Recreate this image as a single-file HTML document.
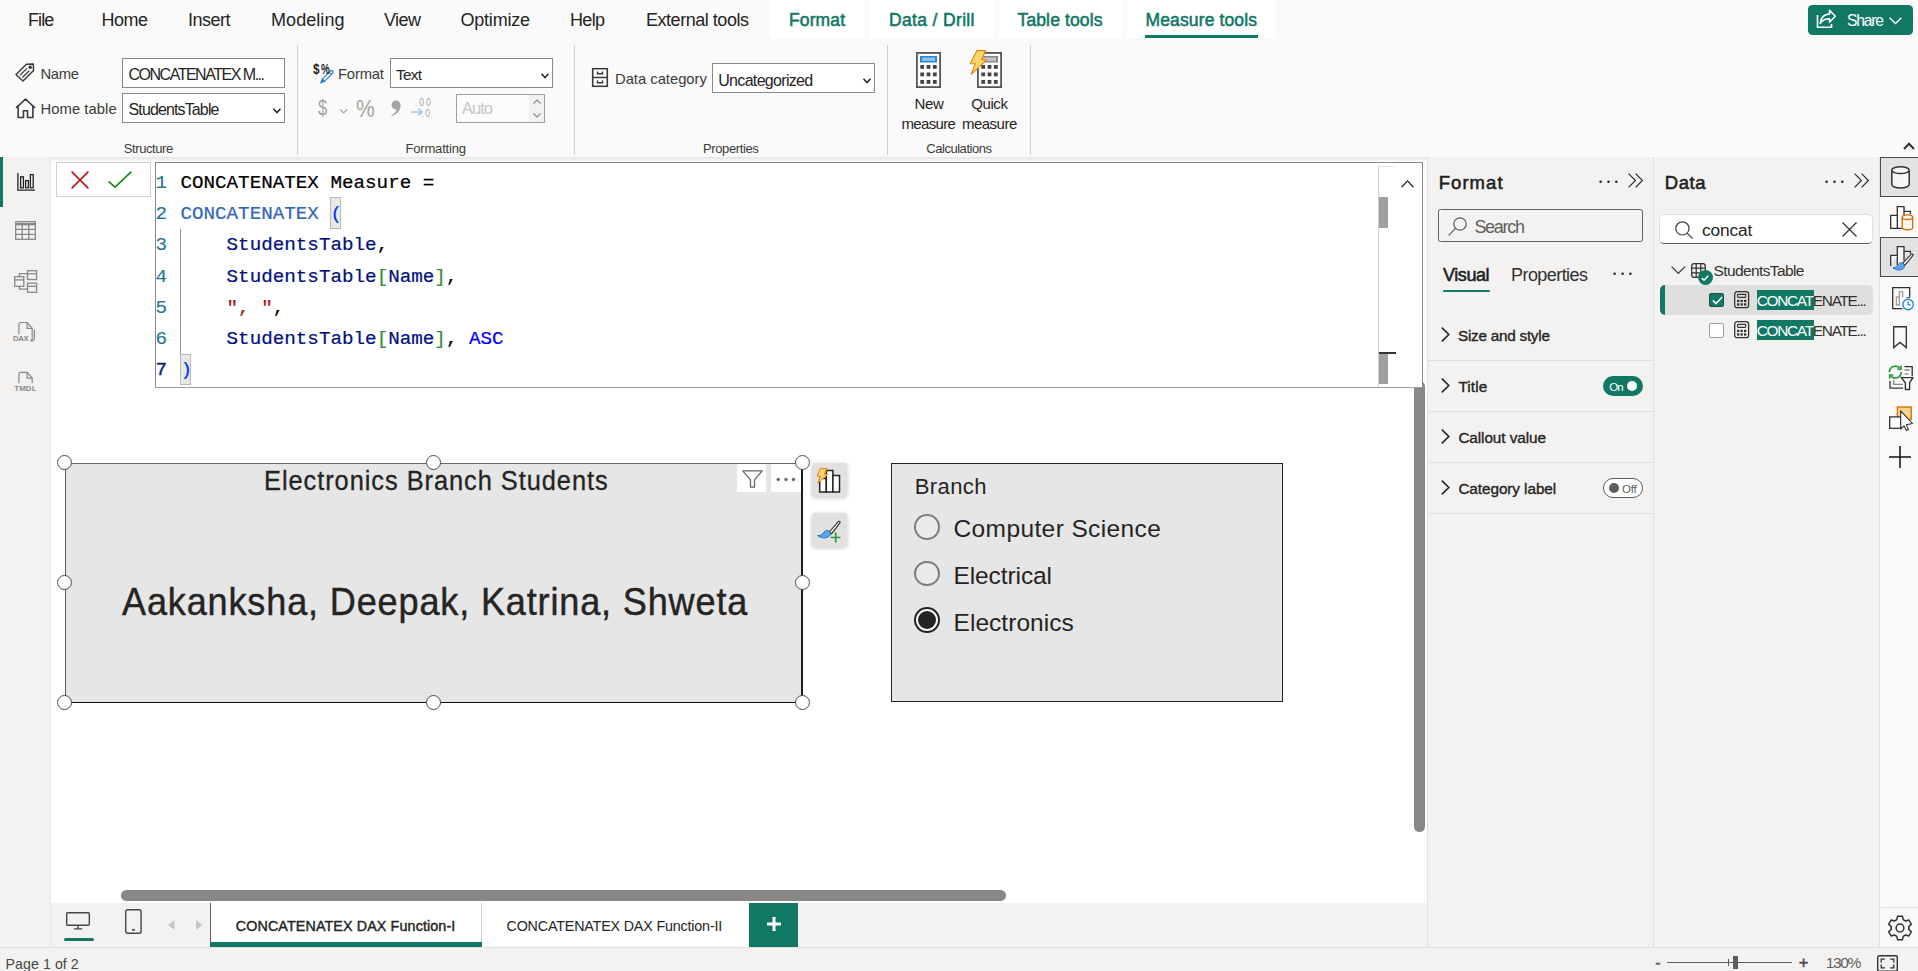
<!DOCTYPE html>
<html lang="en">
<head>
<meta charset="utf-8">
<title>Power BI Desktop - CONCATENATEX</title>
<style>
*{box-sizing:border-box;margin:0;padding:0}
html,body{width:1918px;height:971px;overflow:hidden;background:#fff}
body{font-family:"Liberation Sans",sans-serif;color:#252423;position:relative}
#app{position:absolute;left:0;top:0;width:1918px;height:971px;overflow:hidden;background:#fff}
.a{position:absolute}
.t{position:absolute;white-space:nowrap;line-height:1;color:#252423}
svg{position:absolute;overflow:visible}
.teal{color:#117865}
/* top */
#top{left:0;top:0;width:1918px;height:157px;background:#fafafa}
.wtab{top:0;height:38px;background:#fff}
.vsep{width:1px;top:45px;height:110px;background:#d2d0ce}
.inp{background:#fff;border:1px solid #8a8886}
.grp{color:#3b3a39}
/* left nav */
#lnav{left:0;top:157px;width:51px;height:790px;background:#f3f2f1;border-right:1px solid #e8e6e4}
/* editor */
.mono{font-family:"Liberation Mono",monospace;font-size:19.24px;line-height:31.3px;white-space:pre;position:absolute;left:180.4px;-webkit-text-stroke:.22px}
.ln{font-family:"Liberation Mono",monospace;font-size:19.24px;line-height:31.3px;position:absolute;left:155.6px;color:#237893;-webkit-text-stroke:.15px}
/* panes */
#fpane{left:1427px;top:157px;width:227px;height:790px;background:#f3f2f1;border-left:1px solid #e3e1df;border-right:1px solid #e1dfdd}
#dpane{left:1654px;top:157px;width:225px;height:790px;background:#f3f2f1}
#rbar{left:1879px;top:157px;width:39px;height:790px;background:#faf9f8;border-left:1px solid #e1dfdd}
.hsep{left:1428px;width:225px;height:1px;background:#e1dfdd}
.hl{background:#117865;color:#fff}
/* bottom */
#pbar{left:51px;top:903px;width:1376px;height:44px;background:#f3f2f1}
#status{left:0;top:947px;width:1918px;height:24px;background:#f3f2f1;border-top:1px solid #e1dfdd}
.handle{width:15px;height:15px;border-radius:50%;background:#fff;border:1.3px solid #4a4a4a}
</style>
</head>
<body>
<div id="app">

<!-- ================= TOP TABS + RIBBON ================= -->
<div id="top" class="a"></div>
<div class="a wtab" style="left:770px;width:94px"></div>
<div class="a wtab" style="left:870px;width:124px"></div>
<div class="a wtab" style="left:999px;width:123px"></div>
<div class="a wtab" style="left:1127px;width:149px"></div>
<div class="a" style="left:1145px;top:35px;width:113px;height:3px;background:#117865"></div>
<span class="t" style="left:28.00px;top:11.01px;font-size:18px;letter-spacing:-0.917px">File</span>
<span class="t" style="left:101.50px;top:11.01px;font-size:18px;letter-spacing:-0.500px">Home</span>
<span class="t" style="left:188.00px;top:11.01px;font-size:18px;letter-spacing:-0.500px">Insert</span>
<span class="t" style="left:271.00px;top:11.01px;font-size:18px;letter-spacing:0.062px">Modeling</span>
<span class="t" style="left:384.00px;top:11.01px;font-size:18px;letter-spacing:-0.583px">View</span>
<span class="t" style="left:460.50px;top:11.01px;font-size:18px;letter-spacing:-0.214px">Optimize</span>
<span class="t" style="left:570.00px;top:11.01px;font-size:18px;letter-spacing:-0.667px">Help</span>
<span class="t" style="left:646.00px;top:11.01px;font-size:18px;letter-spacing:-0.466px">External tools</span>
<span class="t" style="left:789.00px;top:12.00px;font-size:17.5px;letter-spacing:0.113px;color:#117865;-webkit-text-stroke:0.55px">Format</span>
<span class="t" style="left:889.00px;top:12.00px;font-size:17.5px;letter-spacing:0.347px;color:#117865;-webkit-text-stroke:0.55px">Data / Drill</span>
<span class="t" style="left:1017.50px;top:12.00px;font-size:17.5px;letter-spacing:0.131px;color:#117865;-webkit-text-stroke:0.55px">Table tools</span>
<span class="t" style="left:1145.50px;top:12.00px;font-size:17.5px;letter-spacing:0.130px;color:#117865;-webkit-text-stroke:0.55px">Measure tools</span>

<!-- share button -->
<div class="a" style="left:1808px;top:5px;width:105px;height:30px;border-radius:4.5px;background:#117865"></div>
<svg style="left:1816px;top:9px" width="21" height="20" viewBox="0 0 21 20" fill="none" stroke="#fff" stroke-width="1.6"><path d="M1.5 6v12.2h14V15"/><path d="M13.5 1.2l5.8 6-5.8 6V9.8c-4.5 0-7.2 1.4-9.3 4.6.5-5.2 3.6-9 9.3-9.4z" stroke-linejoin="round"/></svg>
<span class="t" style="left:1847.00px;top:13.01px;font-size:15.6px;letter-spacing:-1.172px;color:#fff">Share</span>
<svg style="left:1889px;top:16.5px" width="13" height="7.5" viewBox="0 0 13 7.5" fill="none" stroke="#fff" stroke-width="1.5"><path d="M.6.7l5.9 5.8L12.4.7"/></svg>

<!-- group separators -->
<div class="a vsep" style="left:297px"></div>
<div class="a vsep" style="left:574px"></div>
<div class="a vsep" style="left:887px"></div>
<div class="a vsep" style="left:1030px"></div>

<!-- Structure group -->
<svg style="left:15px;top:63px" width="20" height="19" viewBox="0 0 20 19" fill="none" stroke="#3b3a39" stroke-width="1.450" stroke-linejoin="round"><path d="M1 11.5L11.5 1.3l6.8-.3.2 6.6L8 18z"/><circle cx="15.2" cy="4.2" r="1" fill="#3b3a39"/><path d="M5 12.2l7-6.8M7.3 14.5l7-6.8" stroke-width="1.2"/></svg>
<span class="t" style="left:40.50px;top:67.00px;font-size:14.8px;letter-spacing:-0.333px;color:#3b3a39">Name</span>
<div class="a inp" style="left:122px;top:58px;width:163px;height:30px"></div>
<span class="t" style="left:128.50px;top:67.00px;font-size:16px;letter-spacing:-1.488px">CONCATENATEX M...</span>
<svg style="left:14.600px;top:97.700px" width="21" height="20.500" viewBox="0 0 20 20" fill="none" stroke="#3b3a39" stroke-width="1.550" stroke-linejoin="round"><path d="M.8 9.6L10 1l9.2 8.6M2.8 8v11h5.2v-6.5h4V19h5.2V8"/></svg>
<span class="t" style="left:40.50px;top:102.00px;font-size:14.8px;letter-spacing:0.056px;color:#3b3a39">Home table</span>
<div class="a inp" style="left:122px;top:93px;width:163px;height:30px"></div>
<span class="t" style="left:128.50px;top:102.00px;font-size:16px;letter-spacing:-0.870px">StudentsTable</span>
<svg style="left:273px;top:107.5px" width="8" height="6" viewBox="0 0 8 6" fill="none" stroke="#252423" stroke-width="1.5"><path d="M.5.8L4 4.6 7.5.8"/></svg>
<span class="t grp" style="left:123.75px;top:142.00px;font-size:13px;letter-spacing:-0.406px">Structure</span>

<!-- Formatting group -->
<svg style="left:319px;top:68px" width="16" height="16" viewBox="0 0 16 16" fill="none" stroke="#1f7fd1" stroke-width="1.150" stroke-linejoin="round"><path d="M3.300 11.100L11.300 3.100c.8-.8 1.800-.6 2.300-.1s.7 1.500-.1 2.300L5.500 13.300z" fill="#fafafa"/><path d="M3.300 11.100l2.200 2.200L1.700 14.900z" fill="#1f7fd1"/><path d="M10.300 4.100l2.200 2.200"/></svg>
<span class="t" style="left:312.90px;top:61.01px;font-size:15px;font-weight:bold;color:#252423;transform:scaleX(0.78);transform-origin:0 0">$</span>
<span class="t" style="left:320.60px;top:62.00px;font-size:14.5px;font-weight:bold;color:#252423;transform:scaleX(0.68);transform-origin:0 0">%</span>
<span class="t" style="left:338.00px;top:67.00px;font-size:14.8px;letter-spacing:-0.188px;color:#3b3a39">Format</span>
<div class="a inp" style="left:389.5px;top:58px;width:163.5px;height:30px"></div>
<span class="t" style="left:396.00px;top:67.00px;font-size:15.3px;letter-spacing:-0.688px">Text</span>
<svg style="left:541px;top:72.5px" width="8" height="6" viewBox="0 0 8 6" fill="none" stroke="#252423" stroke-width="1.5"><path d="M.5.8L4 4.6 7.5.8"/></svg>
<span class="t" style="left:317.80px;top:97.01px;font-size:22.5px;color:#a6a4a2;transform:scaleX(0.74);transform-origin:0 0">$</span>
<svg style="left:339.800px;top:109.300px" width="8" height="5" viewBox="0 0 8 5" fill="none" stroke="#a6a4a2" stroke-width="1.200"><path d="M.4.500L3.700 3.900 7 .5"/></svg>
<span class="t" style="left:356.00px;top:97.01px;font-size:24.5px;color:#a6a4a2;transform:scaleX(0.86);transform-origin:0 0">%</span>
<svg style="left:390.500px;top:100.200px" width="10" height="16" viewBox="0 0 10 16" fill="#a6a4a2"><circle cx="5" cy="4.900" r="4.500"/><path d="M9.500 5.200C9.900 10.200 6 14.300.8 15.900L.4 15C3.400 13.600 5.400 11.600 5.700 9.200z"/></svg>
<span class="t" style="left:414.50px;top:97.01px;font-size:11px;letter-spacing:2.408px;color:#a6a4a2;transform:scaleX(0.78);transform-origin:0 0">.00</span>
<span class="t" style="left:421.00px;top:108.00px;font-size:11px;letter-spacing:2.351px;color:#a6a4a2;transform:scaleX(0.78);transform-origin:0 0">.0</span>
<svg style="left:410.800px;top:108.400px" width="12" height="8" viewBox="0 0 12 8" fill="none" stroke="#9cc8e8" stroke-width="1.500"><path d="M0 3.900h10.800M7.300.4l3.700 3.500-3.700 3.500"/></svg>
<div class="a" style="left:456px;top:94px;width:89px;height:29px;background:#fcfcfc;border:1px solid #a19f9d"></div>
<div class="a" style="left:529px;top:95px;width:15px;height:27px;background:#f3f2f1"></div>
<span class="t" style="left:462.00px;top:100.02px;font-size:16.5px;letter-spacing:-0.979px;color:#c8c6c4">Auto</span>
<svg style="left:532.5px;top:98.5px" width="8" height="19" viewBox="0 0 8 19" fill="none" stroke="#8a8886" stroke-width="1.1"><path d="M.5 4.5L4 1l3.5 3.5M.5 14.5L4 18l3.5-3.5"/></svg>
<span class="t grp" style="left:405.50px;top:142.00px;font-size:13px;letter-spacing:-0.181px">Formatting</span>

<!-- Properties group -->
<svg style="left:592px;top:68px" width="16" height="19" viewBox="0 0 16 19" fill="none" stroke="#3b3a39" stroke-width="1.550"><rect x=".7" y=".7" width="14.6" height="17.6"/><path d="M.7 9.5h14.6M5.5 3.5v2.2h5V3.5M5.5 12.5v2.2h5v-2.2"/></svg>
<span class="t" style="left:615.00px;top:72.00px;font-size:14.8px;letter-spacing:-0.021px;color:#3b3a39">Data category</span>
<div class="a inp" style="left:712px;top:63px;width:163px;height:30px"></div>
<span class="t" style="left:718.25px;top:73.00px;font-size:16px;letter-spacing:-0.682px">Uncategorized</span>
<svg style="left:863px;top:77.5px" width="8" height="6" viewBox="0 0 8 6" fill="none" stroke="#252423" stroke-width="1.5"><path d="M.5.8L4 4.6 7.5.8"/></svg>
<span class="t grp" style="left:703.00px;top:142.00px;font-size:13px;letter-spacing:-0.389px">Properties</span>

<!-- Calculations group -->
<svg style="left:916px;top:52px" width="25" height="36" viewBox="0 0 25 36"><rect x=".9" y=".9" width="23.2" height="34.2" fill="#fff" stroke="#555" stroke-width="1.8"/><rect x="4" y="4" width="17" height="6.5" fill="#2b88d8"/><rect x="6" y="5.5" width="13" height="3.5" fill="#8fc3ef"/><g fill="#444"><rect x="4.3" y="13" width="3.8" height="3.8"/><rect x="10.6" y="13" width="3.8" height="3.8"/><rect x="16.9" y="13" width="3.8" height="3.8"/><rect x="4.3" y="20.5" width="3.8" height="3.8"/><rect x="10.6" y="20.5" width="3.8" height="3.8"/><rect x="16.9" y="20.5" width="3.8" height="3.8"/><rect x="4.3" y="28" width="3.8" height="3.8"/><rect x="10.6" y="28" width="3.8" height="3.8"/><rect x="16.9" y="28" width="3.8" height="3.8"/></g></svg>
<span class="t" style="left:914.40px;top:96.01px;font-size:15px;letter-spacing:-0.331px">New</span>
<span class="t" style="left:901.50px;top:116.01px;font-size:15px;letter-spacing:-0.663px">measure</span>
<svg style="left:969px;top:50px" width="33" height="38" viewBox="0 0 33 38"><rect x="8.9" y="2.9" width="23.2" height="34.2" fill="#fff" stroke="#555" stroke-width="1.8"/><rect x="12" y="6" width="17" height="6.5" fill="#8a8886"/><rect x="14" y="7.5" width="13" height="3.5" fill="#c8c6c4"/><g fill="#444"><rect x="12.3" y="15" width="3.8" height="3.8"/><rect x="18.6" y="15" width="3.8" height="3.8"/><rect x="24.9" y="15" width="3.8" height="3.8"/><rect x="12.3" y="22.5" width="3.8" height="3.8"/><rect x="18.6" y="22.5" width="3.8" height="3.8"/><rect x="24.9" y="22.5" width="3.8" height="3.8"/><rect x="12.3" y="30" width="3.8" height="3.8"/><rect x="18.6" y="30" width="3.8" height="3.8"/><rect x="24.9" y="30" width="3.8" height="3.8"/></g><path d="M8 .6h8.6l-4 9.2h5L2.2 24.4l4.2-10.6H1.2z" fill="#fbd66b" stroke="#e8820c" stroke-width="1.1" stroke-linejoin="round"/></svg>
<span class="t" style="left:971.25px;top:96.01px;font-size:15px;letter-spacing:-0.422px">Quick</span>
<span class="t" style="left:962.00px;top:116.01px;font-size:15px;letter-spacing:-0.521px">measure</span>
<span class="t grp" style="left:926.25px;top:142.00px;font-size:13px;letter-spacing:-0.460px">Calculations</span>
<!-- collapse ribbon chevron -->
<svg style="left:1902.500px;top:141.800px" width="12" height="8" viewBox="0 0 12 8" fill="none" stroke="#323130" stroke-width="2"><path d="M1 7l5-5.300L11 7"/></svg>
<!-- ribbon bottom shadow -->
<div class="a" style="left:0;top:157px;width:1918px;height:5px;background:linear-gradient(#e4e4e4,rgba(240,240,240,0))"></div>
<!--TOP-->

<!-- ================= LEFT NAV ================= -->
<div id="lnav" class="a"></div>
<div class="a" style="left:0;top:157px;width:3px;height:50px;background:#117865"></div>
<!-- report icon -->
<svg style="left:16.5px;top:172.5px" width="18" height="18" viewBox="0 0 18 18" fill="none" stroke="#252423" stroke-width="1.3"><path d="M.9 0v17.2H18"/><rect x="3.6" y="3.8" width="2.8" height="11"/><rect x="8.6" y="7.6" width="2.8" height="7.2"/><rect x="13.4" y="1.6" width="2.8" height="13.2"/></svg>
<!-- table icon -->
<svg style="left:15px;top:221px" width="21" height="19" viewBox="0 0 21 19" fill="none" stroke="#8a8886" stroke-width="1.3"><rect x=".7" y=".7" width="19.6" height="17.6"/><path d="M.7 3.2h19.6" stroke-width="2.4"/><path d="M.7 8.4h19.6M.7 13.3h19.6M7.2 3.2v15M13.8 3.2v15"/></svg>
<!-- model icon -->
<svg style="left:14px;top:270px" width="24" height="23" viewBox="0 0 24 23" fill="none" stroke="#8a8886" stroke-width="1.300"><rect x=".7" y="6.700" width="9.100" height="9.600"/><path d="M.7 9.900h9.100"/><rect x="13.500" y=".7" width="9.100" height="8.800"/><path d="M13.500 3.800h9.100"/><rect x="13.500" y="13.200" width="9.100" height="9.100"/><path d="M13.500 16.300h9.100"/><path d="M5.400 6.700V3.700h8.100M5.400 16.300v2.900h8.100"/></svg>
<!-- DAX icon -->
<svg style="left:12.500px;top:320.500px" width="23" height="22" viewBox="0 0 23 22" fill="none" stroke="#8a8886" stroke-width="1.200"><path d="M5.900 13.200V3.700c0-1.300.9-2.200 2.200-2.200h6l5.100 5.800v10.200c0 1.300-.7 2.200-1.900 2.400"/><path d="M14.100 1.500v5.800h5.100"/><path d="M21.400 8.800v8c0 1.900-1.300 3.200-3.300 3.400"/></svg>
<span class="t" style="left:13.00px;top:335.00px;font-size:7.8px;letter-spacing:-0.350px;font-weight:bold;color:#8a8886">DAX</span>
<!-- TMDL icon -->
<svg style="left:12.500px;top:370.500px" width="23" height="13" viewBox="0 0 23 13" fill="none" stroke="#8a8886" stroke-width="1.200"><path d="M5.900 12.300V3.600c0-1.300.9-2.200 2.200-2.200h6l5.100 5.700v5.200"/><path d="M14.100 1.400v5.700h5.100"/></svg>
<span class="t" style="left:14.20px;top:385.00px;font-size:7.8px;letter-spacing:0.204px;font-weight:bold;color:#8a8886">TMDL</span>
<!--LNAV-->

<!-- ================= CANVAS ================= -->
<!-- commit/cancel box -->
<div class="a" style="left:56px;top:162px;width:95px;height:35px;background:#fff;border:1px solid #d2d0ce"></div>
<svg style="left:71px;top:171px" width="18" height="18" viewBox="0 0 18 18" fill="none" stroke="#b5121b" stroke-width="1.5"><path d="M.6.6l16.800 16.800M17.400.6L.6 17.400"/></svg>
<svg style="left:107.500px;top:171px" width="24" height="17" viewBox="0 0 24 17" fill="none" stroke="#138a13" stroke-width="1.600"><path d="M.6 10.400l6.400 5.800L23.400.6"/></svg>
<!-- canvas vertical scrollbar (behind editor) -->
<div class="a" style="left:1414px;top:380.500px;width:11px;height:451.500px;background:#8a8886;border-radius:5.500px"></div>
<!-- editor -->
<div class="a" style="left:155px;top:162px;width:1268px;height:226px;background:#fff;border:1px solid #8a8886;border-bottom-color:#a19f9d"></div>
<div class="a" style="left:180.400px;top:229px;width:1px;height:125px;background:#939393"></div>
<div class="a" style="left:330px;top:197px;width:11px;height:32px;background:#e3ebe3;border:1px solid #b9b9b9"></div>
<div class="a" style="left:180px;top:354px;width:11px;height:31px;background:#e3ebe3;border:1px solid #b9b9b9"></div>
<div class="ln" style="top:167.700px">1<br>2<br>3<br>4<br>5<br>6<br><span style="color:#0b216f;-webkit-text-stroke:.4px">7</span></div>
<div class="mono" style="top:167.700px"><span style="color:#000">CONCATENATEX Measure =</span>
<span style="color:#3165bb">CONCATENATEX</span> <span style="color:#0431fa">(</span>
<span style="color:#001080">    StudentsTable</span><span style="color:#000">,</span>
<span style="color:#001080">    StudentsTable</span><span style="color:#319331">[</span><span style="color:#001080">Name</span><span style="color:#319331">]</span><span style="color:#000">,</span>
<span style="color:#a31515">    ", "</span><span style="color:#000">,</span>
<span style="color:#001080">    StudentsTable</span><span style="color:#319331">[</span><span style="color:#001080">Name</span><span style="color:#319331">]</span><span style="color:#000">,</span> <span style="color:#0000ff">ASC</span>
<span style="color:#0431fa">)</span></div>
<!-- overview ruler -->
<div class="a" style="left:1378px;top:166px;width:1px;height:221px;background:#d0d0d0"></div>
<div class="a" style="left:1378px;top:166px;width:18px;height:1px;background:#e4e4e4"></div>
<div class="a" style="left:1379px;top:197px;width:8.500px;height:31px;background:#a0a0a0"></div>
<div class="a" style="left:1379px;top:354px;width:8.500px;height:30px;background:#a0a0a0"></div>
<div class="a" style="left:1379px;top:352px;width:17px;height:2px;background:#333"></div>
<svg style="left:1400.500px;top:180px" width="13" height="8" viewBox="0 0 13 8" fill="none" stroke="#252423" stroke-width="1.300"><path d="M.6 7.200L6.500.9l5.900 6.300"/></svg>
<!-- canvas vertical scrollbar -->
<!-- horizontal scrollbar -->
<div class="a" style="left:121px;top:890px;width:885px;height:11px;background:#8a8886;border-radius:5.500px"></div>

<!-- ===== card visual ===== -->
<div class="a" style="left:65px;top:463px;width:738.400px;height:239.500px;background:#e6e6e6;border-style:solid;border-color:#666 #1a1a1a #0a0a0a #5c5c5c;border-width:1.300px 2.500px 1.800px 1.400px"></div>
<span class="t din" style="left:263.60px;top:468.02px;font-size:27px;letter-spacing:1.017px;transform:scaleX(0.94);transform-origin:0 0;-webkit-text-stroke:.3px #252423">Electronics Branch Students</span>
<span class="t din" style="left:122.00px;top:583.00px;font-size:38.8px;letter-spacing:0.900px;transform:scaleX(0.93);transform-origin:0 0;-webkit-text-stroke:.45px #252423">Aakanksha, Deepak, Katrina, Shweta</span>
<div class="a" style="left:737px;top:464.300px;width:29px;height:27.700px;background:#fff"></div>
<div class="a" style="left:771px;top:464.300px;width:30px;height:27.700px;background:#fff"></div>
<svg style="left:741.500px;top:470px" width="21" height="18" viewBox="0 0 21 18" fill="none" stroke="#666" stroke-width="1.300" stroke-linejoin="round"><path d="M.8.800h19.400l-7.700 9v7.400h-4v-7.400z"/></svg>
<svg style="left:776px;top:476.500px" width="20" height="5" viewBox="0 0 20 5" fill="#666"><circle cx="2.300" cy="2.400" r="1.700"/><circle cx="10" cy="2.400" r="1.700"/><circle cx="17.500" cy="2.400" r="1.700"/></svg>
<!-- handles -->
<div class="a handle" style="left:57px;top:454.700px"></div>
<div class="a handle" style="left:425.500px;top:454.700px"></div>
<div class="a handle" style="left:795px;top:454.700px"></div>
<div class="a handle" style="left:57px;top:574.700px"></div>
<div class="a handle" style="left:795px;top:574.700px"></div>
<div class="a handle" style="left:57px;top:694.800px"></div>
<div class="a handle" style="left:425.500px;top:694.800px"></div>
<div class="a handle" style="left:795px;top:694.800px"></div>
<!-- side buttons -->
<div class="a" style="left:812.300px;top:463px;width:34.300px;height:34px;background:#e3e1df;border-radius:3px;box-shadow:0 1px 4px rgba(0,0,0,.22)"></div>
<div class="a" style="left:812.300px;top:513.200px;width:34.300px;height:34px;background:#e3e1df;border-radius:3px;box-shadow:0 1px 4px rgba(0,0,0,.22)"></div>
<svg style="left:816px;top:467.500px" width="25" height="25" viewBox="0 0 25 25"><g fill="#fff" stroke="#252423" stroke-width="1.500"><rect x="3.700" y="10.500" width="6.600" height="13.500"/><rect x="10.300" y="2.500" width="6.600" height="21.500"/><rect x="16.900" y="7.500" width="6.600" height="16.500"/></g><path d="M4.200.6h7l-3 5.600h3.600L1.800 15.200l2.800-7H1z" fill="#fbd66b" stroke="#e8820c" stroke-width="1" stroke-linejoin="round"/></svg>
<svg style="left:817px;top:519.500px" width="25" height="23" viewBox="0 0 25 23"><path d="M12.300 12L21.300 1.600c.9-.9 2.300.1 1.600 1.200L14.500 13.800z" fill="#fff" stroke="#252423" stroke-width="1.100" stroke-linejoin="round"/><path d="M.5 15.600c3 .3 5.200-1.600 6.600-3.600 1.200-1.800 3.900-2 5.400-.6 1.400 1.400 1.200 3.600-.4 4.900-3 2.500-8.300 2-11.600-.7z" fill="#5ba4e6" stroke="#1f6fc2" stroke-width=".9"/><path d="M18.700 12.600v9.800M13.800 17.500h9.800" stroke="#2a9a43" stroke-width="1.700" fill="none"/></svg>

<!-- ===== slicer visual ===== -->
<div class="a" style="left:891px;top:463px;width:392px;height:239px;background:#e6e6e6;border:1.300px solid #252423"></div>
<span class="t" style="left:914.70px;top:476.00px;font-size:22px;letter-spacing:0.403px;color:#252423">Branch</span>
<div class="a" style="left:914px;top:514.200px;width:25.800px;height:25.800px;border-radius:50%;border:2px solid #807e7c;background:#eaeaea"></div>
<div class="a" style="left:914px;top:560.500px;width:25.800px;height:25.800px;border-radius:50%;border:2px solid #807e7c;background:#eaeaea"></div>
<div class="a" style="left:914px;top:607.100px;width:25.800px;height:25.800px;border-radius:50%;border:2px solid #252423;background:#f6f6f6"></div>
<div class="a" style="left:917.500px;top:610.600px;width:18.800px;height:18.800px;border-radius:50%;background:#252423"></div>
<span class="t" style="left:953.50px;top:517.00px;font-size:24.5px;letter-spacing:0.389px;color:#252423">Computer Science</span>
<span class="t" style="left:953.50px;top:564.00px;font-size:24.5px;letter-spacing:-0.097px;color:#252423">Electrical</span>
<span class="t" style="left:953.50px;top:611.01px;font-size:24.5px;letter-spacing:0.049px;color:#252423">Electronics</span>
<!--CANVAS-->

<!-- ================= FORMAT PANE ================= -->
<div id="fpane" class="a"></div>
<span class="t" style="left:1438.75px;top:174.01px;font-size:18.5px;letter-spacing:1.038px;color:#201f1e;-webkit-text-stroke:0.55px">Format</span>
<svg style="left:1598.500px;top:179.500px" width="19" height="4" viewBox="0 0 19 4" fill="#252423"><circle cx="1.600" cy="1.700" r="1.250"/><circle cx="9.500" cy="1.700" r="1.250"/><circle cx="17.300" cy="1.700" r="1.250"/></svg>
<svg style="left:1627.500px;top:173px" width="15" height="15" viewBox="0 0 15 15" fill="none" stroke="#252423" stroke-width="1.150"><path d="M.6.6l6.800 6.900-6.800 6.900M7.600.6l6.800 6.900-6.800 6.900"/></svg>
<div class="a" style="left:1438px;top:209px;width:205px;height:33px;border:1px solid #605e5c;border-radius:2.500px"></div>
<svg style="left:1447.500px;top:216.500px" width="19" height="19" viewBox="0 0 19 19" fill="none" stroke="#605e5c" stroke-width="1.250"><circle cx="12" cy="7" r="6.200"/><path d="M7.600 11.400L.6 18.400"/></svg>
<span class="t" style="left:1474.40px;top:218.01px;font-size:18px;letter-spacing:-1.292px;color:#605e5c">Search</span>
<span class="t" style="left:1443.00px;top:266.01px;font-size:18px;letter-spacing:-0.417px;color:#201f1e;-webkit-text-stroke:0.55px">Visual</span>
<div class="a" style="left:1443px;top:289.700px;width:47px;height:2.600px;background:#117865;border-radius:1px"></div>
<span class="t" style="left:1511.00px;top:266.01px;font-size:18px;letter-spacing:-0.562px;color:#323130">Properties</span>
<svg style="left:1613.300px;top:272px" width="19" height="4" viewBox="0 0 19 4" fill="#252423"><circle cx="1.600" cy="1.700" r="1.250"/><circle cx="9.600" cy="1.700" r="1.250"/><circle cx="17.400" cy="1.700" r="1.250"/></svg>
<!-- rows -->
<svg style="left:1441.300px;top:327px" width="9" height="15" viewBox="0 0 9 15" fill="none" stroke="#252423" stroke-width="1.600"><path d="M.8.600l7 6.900-7 6.900"/></svg>
<span class="t" style="left:1458.00px;top:328.01px;font-size:15.3px;letter-spacing:-0.255px;color:#252423;-webkit-text-stroke:0.36px">Size and style</span>
<div class="a hsep" style="top:360px"></div>
<svg style="left:1441.300px;top:378.300px" width="9" height="15" viewBox="0 0 9 15" fill="none" stroke="#252423" stroke-width="1.600"><path d="M.8.600l7 6.900-7 6.900"/></svg>
<span class="t" style="left:1458.40px;top:379.01px;font-size:15.3px;letter-spacing:0.106px;color:#252423;-webkit-text-stroke:0.36px">Title</span>
<div class="a" style="left:1603px;top:376px;width:40px;height:20px;border-radius:10px;background:#117865"></div>
<span class="t" style="left:1609.20px;top:382.00px;font-size:11.5px;letter-spacing:-0.812px;color:#fff">On</span>
<div class="a" style="left:1626.800px;top:380.800px;width:10.500px;height:10.500px;border-radius:50%;background:#fff"></div>
<div class="a hsep" style="top:411px"></div>
<svg style="left:1441.300px;top:429.300px" width="9" height="15" viewBox="0 0 9 15" fill="none" stroke="#252423" stroke-width="1.600"><path d="M.8.600l7 6.900-7 6.900"/></svg>
<span class="t" style="left:1458.40px;top:430.00px;font-size:15.3px;letter-spacing:-0.075px;color:#252423;-webkit-text-stroke:0.36px">Callout value</span>
<div class="a hsep" style="top:462px"></div>
<svg style="left:1441.300px;top:480px" width="9" height="15" viewBox="0 0 9 15" fill="none" stroke="#252423" stroke-width="1.600"><path d="M.8.600l7 6.900-7 6.900"/></svg>
<span class="t" style="left:1458.40px;top:481.00px;font-size:15.3px;letter-spacing:-0.065px;color:#252423;-webkit-text-stroke:0.36px">Category label</span>
<div class="a" style="left:1603px;top:478.200px;width:40px;height:20px;border-radius:10px;background:#fff;border:1px solid #605e5c"></div>
<div class="a" style="left:1608.800px;top:483px;width:10.400px;height:10.400px;border-radius:50%;background:#605e5c"></div>
<span class="t" style="left:1622.00px;top:484.00px;font-size:11.5px;letter-spacing:-0.194px;color:#605e5c">Off</span>
<div class="a hsep" style="top:513px"></div>
<!--FPANE-->

<!-- ================= DATA PANE ================= -->
<div id="dpane" class="a"></div>
<span class="t" style="left:1664.75px;top:174.01px;font-size:18.5px;letter-spacing:0.575px;color:#201f1e;-webkit-text-stroke:0.55px">Data</span>
<svg style="left:1824.500px;top:179.500px" width="19" height="4" viewBox="0 0 19 4" fill="#252423"><circle cx="1.600" cy="1.700" r="1.250"/><circle cx="9.500" cy="1.700" r="1.250"/><circle cx="17.300" cy="1.700" r="1.250"/></svg>
<svg style="left:1853.700px;top:173px" width="15" height="15" viewBox="0 0 15 15" fill="none" stroke="#252423" stroke-width="1.150"><path d="M.6.600l6.800 6.900-6.800 6.900M7.600.6l6.800 6.900-6.800 6.900"/></svg>
<div class="a" style="left:1659.400px;top:214.400px;width:213.600px;height:29.400px;background:#fff;border:1px solid #e1dfdd;border-bottom:1.500px solid #605e5c;border-radius:5px"></div>
<svg style="left:1674.500px;top:220.500px" width="18" height="18" viewBox="0 0 18 18" fill="none" stroke="#424242" stroke-width="1.200"><circle cx="7.400" cy="7.400" r="6.600"/><path d="M12.200 12.200l5.300 5.300"/></svg>
<span class="t" style="left:1702.00px;top:222.00px;font-size:17.3px;letter-spacing:-0.100px;color:#252423">concat</span>
<svg style="left:1841.800px;top:222px" width="15" height="15" viewBox="0 0 15 15" fill="none" stroke="#323130" stroke-width="1.250"><path d="M.5.500l14 14M14.500.5l-14 14"/></svg>
<!-- tree -->
<svg style="left:1670.500px;top:266px" width="15" height="8" viewBox="0 0 15 8" fill="none" stroke="#424242" stroke-width="1.200"><path d="M.5.600L7.300 7.300 14.200.6"/></svg>
<svg style="left:1690.500px;top:262.500px" width="15" height="15" viewBox="0 0 15 15" fill="none" stroke="#323130" stroke-width="1.250"><rect x=".7" y=".7" width="13.600" height="13.600" rx="2.600"/><path d="M5.200.7v13.600M9.800.7v13.600M.7 5.200h13.600M.7 9.800h13.600"/></svg>
<div class="a" style="left:1697.750px;top:270px;width:15.100px;height:15.100px;border-radius:50%;background:#117865"></div>
<svg style="left:1701.300px;top:274.500px" width="8" height="6" viewBox="0 0 8 6" fill="none" stroke="#fff" stroke-width="1.500"><path d="M.7 3.100l2.300 2.100L7.300.8"/></svg>
<span class="t" style="left:1713.50px;top:263.01px;font-size:15.5px;letter-spacing:-0.612px;color:#323130">StudentsTable</span>
<!-- row 1 (selected) -->
<div class="a" style="left:1660px;top:285px;width:212.750px;height:29.750px;background:#e1dfdd;border-radius:5px"></div>
<div class="a" style="left:1660px;top:285px;width:5px;height:29.750px;background:#117865;border-radius:5px 0 0 5px"></div>
<div class="a" style="left:1709.400px;top:293px;width:14.400px;height:14.400px;background:#117865;border:1px solid #0c5a4b;border-radius:2px"></div>
<svg style="left:1711.500px;top:296px" width="11" height="9" viewBox="0 0 11 9" fill="none" stroke="#fff" stroke-width="1.500"><path d="M.8 4.400l3.200 3.200L10.200.9"/></svg>
<svg style="left:1734.400px;top:291.250px" width="16" height="18" viewBox="0 0 16 18" fill="none" stroke="#323130" stroke-width="1.300"><rect x=".7" y=".7" width="13.900" height="16" rx="2.500"/><rect x="3.500" y="3.400" width="8.300" height="3" rx=".8" stroke-width="1.100"/><g fill="#323130" stroke="none"><rect x="3" y="8.800" width="2.300" height="2.300"/><rect x="6.500" y="8.800" width="2.300" height="2.300"/><rect x="10" y="8.800" width="2.300" height="2.300"/><rect x="3" y="12.300" width="2.300" height="2.300"/><rect x="6.500" y="12.300" width="2.300" height="2.300"/><rect x="10" y="12.300" width="2.300" height="2.300"/></g></svg>
<div class="a" style="left:1756.900px;top:290px;width:56.850px;height:19.750px;background:#117865"></div>
<span class="t" style="left:1756.70px;top:293.02px;font-size:15.4px;letter-spacing:-1.284px;color:#323130"><b style="font-weight:normal;color:#fff">CONCAT</b>ENATE...</span>
<!-- row 2 -->
<div class="a" style="left:1709.400px;top:323.400px;width:14.400px;height:14.400px;background:#fff;border:1px solid #a19f9d;border-radius:2px"></div>
<svg style="left:1734.400px;top:321.250px" width="16" height="18" viewBox="0 0 16 18" fill="none" stroke="#323130" stroke-width="1.300"><rect x=".7" y=".7" width="13.900" height="16" rx="2.500"/><rect x="3.500" y="3.400" width="8.300" height="3" rx=".8" stroke-width="1.100"/><g fill="#323130" stroke="none"><rect x="3" y="8.800" width="2.300" height="2.300"/><rect x="6.500" y="8.800" width="2.300" height="2.300"/><rect x="10" y="8.800" width="2.300" height="2.300"/><rect x="3" y="12.300" width="2.300" height="2.300"/><rect x="6.500" y="12.300" width="2.300" height="2.300"/><rect x="10" y="12.300" width="2.300" height="2.300"/></g></svg>
<div class="a" style="left:1756.900px;top:320px;width:56.850px;height:19.750px;background:#117865"></div>
<span class="t" style="left:1756.70px;top:323.02px;font-size:15.4px;letter-spacing:-1.284px;color:#323130"><b style="font-weight:normal;color:#fff">CONCAT</b>ENATE...</span>
<!--DPANE-->

<!-- ================= RIGHT BAR ================= -->
<div id="rbar" class="a"></div>
<div class="a" style="left:1880px;top:157.200px;width:38px;height:39.600px;background:#e3e2e0;border:1.400px solid #4f4d4b;border-right:none"></div>
<div class="a" style="left:1880px;top:237.200px;width:38px;height:39.600px;background:#e3e2e0;border:1.400px solid #4f4d4b;border-right:none"></div>
<!-- 1 data cylinder -->
<svg style="left:1891px;top:166px" width="19" height="23" viewBox="0 0 19 23" fill="#f6f5f4" stroke="#323130" stroke-width="1.500"><path d="M.8 4.200v14.400c0 1.900 3.900 3.500 8.700 3.500s8.700-1.600 8.700-3.500V4.200"/><ellipse cx="9.500" cy="4.200" rx="8.700" ry="3.400"/></svg>
<!-- 2 build visual -->
<svg style="left:1890px;top:206px" width="24" height="25" viewBox="0 0 24 25" fill="none"><g stroke="#323130" stroke-width="1.300" fill="#fff"><path d="M7.300 22.400V.7h6.700v21.700z"/><path d="M.7 22.400V9.300h6.600v13.100z"/><path d="M14 5.300h6.400v2.600" fill="none"/></g><g stroke="#d9710b" stroke-width="1.400" fill="#fdf6ee"><path d="M12.200 11.200v10.400c0 1.300 2.300 2.200 5.250 2.200s5.250-.9 5.250-2.200V11.200"/><ellipse cx="17.450" cy="11.200" rx="5.250" ry="2.300"/></g></svg>
<!-- 3 format visual -->
<svg style="left:1890px;top:246px" width="24" height="25" viewBox="0 0 24 25" fill="none"><g stroke="#323130" stroke-width="1.300" fill="#f6f6f6"><path d="M7.300 19V.7h6.700v14"/><path d="M.7 20V9.400h6.600"/><path d="M14 5.400h6.400v2" fill="none"/></g><path d="M12.600 17.200L21.200 8.300c1-.9 2.400.2 1.600 1.400L14.800 19.300z" fill="#fff" stroke="#323130" stroke-width="1.100" stroke-linejoin="round"/><path d="M3 21.800c2.700-.1 4.200-1.600 5.200-3.300 1.100-1.900 3.600-2.400 5.200-1 1.600 1.400 1.500 3.700-.1 5.100-2.700 2.300-7.600 1.700-10.300-.8z" fill="#5ba4e6" stroke="#1f6fc2" stroke-width=".9"/></svg>
<!-- 4 perf analyzer -->
<svg style="left:1891.500px;top:286.500px" width="23" height="24" viewBox="0 0 23 24" fill="none"><path d="M10.500 21.700H.7V.7h17v10" stroke="#323130" stroke-width="1.300"/><g stroke="#a19f9d" stroke-width="1.300"><path d="M4.400 18v-8h3v8zM7.400 18V4.600h3.200v6"/></g><circle cx="16.100" cy="17.500" r="5.200" stroke="#2b88d8" stroke-width="1.400" fill="#fff"/><path d="M16.100 14.300v3.500h2.700M14.300 10.700h3.600" stroke="#2b88d8" stroke-width="1.300"/></svg>
<!-- 5 bookmark -->
<svg style="left:1893px;top:326.300px" width="14" height="23" viewBox="0 0 14 23" fill="none" stroke="#323130" stroke-width="1.350"><path d="M.7.700h12.600v20.800L7 16.400.7 21.500z"/></svg>
<!-- 6 sync slicers -->
<svg style="left:1887.500px;top:364.800px" width="26" height="26" viewBox="0 0 26 26" fill="none"><g stroke-width="1.300"><path d="M16.500 1.600h7.700v9.600M2 15.800v7.400h13.100" stroke="#323130"/><path d="M16.500 5h5.200M16.500 8.800h4M5.800 14.700v4.700h9.100" stroke="#8a8886"/></g><path d="M13.200 12.600h11.800l-3.400 5.100v6.800h-4.200v-6.800z" fill="#fff" stroke="#323130" stroke-width="1.400" stroke-linejoin="round"/><g stroke="#2a9a43" stroke-width="1.700"><path d="M1.400 7.300A6 6 0 0 1 12.200 3.600M13.200 7A6 6 0 0 1 2.400 10.700"/><path d="M13 .4v3.800H9.200M1.600 13.800V10h3.800" stroke-width="1.500"/></g></svg>
<!-- 7 selection -->
<svg style="left:1889px;top:406px" width="24" height="25" viewBox="0 0 24 25" fill="none"><rect x="8.400" y="1" width="13.800" height="12.400" fill="#f9d48b" stroke="#d9710b" stroke-width="1.400"/><rect x=".7" y="10.900" width="11.400" height="11.400" fill="#fff" stroke="#323130" stroke-width="1.300"/><path d="M11.700 4.800v18.200l3.300-3.200 2.300 4.700 2.200-1-2.200-4.800 6.200-1.200z" fill="#fff" stroke="#323130" stroke-width="1.100" stroke-linejoin="round"/></svg>
<!-- 8 plus -->
<svg style="left:1889px;top:446px" width="22" height="22" viewBox="0 0 22 22" fill="none" stroke="#111" stroke-width="1.500"><path d="M11 0v22M0 11h22"/></svg>
<!-- gear -->
<div class="a" style="left:1881px;top:907px;width:37px;height:1px;background:#e1dfdd"></div>
<svg style="left:1887px;top:914.500px" width="26" height="26" viewBox="0 0 26 26" fill="none" stroke="#323130" stroke-width="1.500" stroke-linejoin="round"><circle cx="13" cy="13" r="3.900"/><path d="M10.600 1.200h4.800l.8 3.400 2.400 1.400 3.300-1 2.400 4.200-2.500 2.400v2.800l2.500 2.400-2.400 4.200-3.300-1-2.400 1.400-.8 3.400h-4.800l-.8-3.400-2.400-1.400-3.300 1-2.400-4.200 2.500-2.400v-2.800L1.700 9.200 4.100 5l3.300 1 2.400-1.400z"/></svg>
<!--RBAR-->

<!-- ================= BOTTOM ================= -->
<div id="pbar" class="a"></div>
<div id="status" class="a"></div>
<!-- view toggles -->
<svg style="left:65.500px;top:912px" width="24" height="18" viewBox="0 0 24 18" fill="none" stroke="#484644" stroke-width="1.400"><rect x=".7" y=".7" width="22.600" height="12.600" rx="1"/><path d="M12 13.300v3.500M7.800 16.900h8.400"/></svg>
<div class="a" style="left:64px;top:938px;width:30px;height:3px;background:#117865;border-radius:1.500px"></div>
<svg style="left:125px;top:909px" width="17" height="25" viewBox="0 0 17 25" fill="none" stroke="#484644" stroke-width="1.400"><rect x=".7" y=".7" width="15.400" height="23.600" rx="2"/><path d="M7 20.800h3" stroke-width="1.600"/></svg>
<svg style="left:167.500px;top:919.500px" width="7" height="10" viewBox="0 0 7 10" fill="#c8c6c4"><path d="M6.500 0v10L0 5z"/></svg>
<svg style="left:195.750px;top:919.500px" width="7" height="10" viewBox="0 0 7 10" fill="#c8c6c4"><path d="M0 0v10L6.500 5z"/></svg>
<!-- page tabs -->
<div class="a" style="left:210px;top:903px;width:271.500px;height:44px;background:#fff;border-left:1px solid #605e5c"></div>
<div class="a" style="left:210px;top:941.750px;width:271.500px;height:5.250px;background:#117865"></div>
<span class="t" style="left:235.75px;top:919.00px;font-size:14.3px;letter-spacing:0.123px;color:#252423;-webkit-text-stroke:0.42px">CONCATENATEX DAX Function-I</span>
<div class="a" style="left:481.500px;top:903px;width:268px;height:44px;background:#fff"></div>
<span class="t" style="left:506.50px;top:919.00px;font-size:14.3px;letter-spacing:-0.169px;color:#252423">CONCATENATEX DAX Function-II</span>
<div class="a" style="left:481px;top:903px;width:1px;height:39px;background:#d2d0ce"></div>
<div class="a" style="left:749.300px;top:903px;width:48.700px;height:44px;background:#117865"></div>
<svg style="left:766.500px;top:916.500px" width="14" height="14" viewBox="0 0 14 14" fill="none" stroke="#fff" stroke-width="3"><path d="M7 0v14M0 7h14"/></svg>
<!-- status bar -->
<span class="t" style="left:5.50px;top:957.01px;font-size:14.2px;letter-spacing:0.069px;color:#484644">Page 1 of 2</span>
<span class="t" style="left:1655.30px;top:955.00px;font-size:16px;color:#605e5c;-webkit-text-stroke:0.45px">-</span>
<div class="a" style="left:1667px;top:962px;width:125px;height:1px;background:#605e5c"></div>
<div class="a" style="left:1728px;top:958.500px;width:1px;height:7px;background:#605e5c"></div>
<div class="a" style="left:1732.500px;top:956px;width:5.500px;height:13px;background:#605e5c"></div>
<span class="t" style="left:1798.80px;top:954.02px;font-size:16.5px;color:#484644;-webkit-text-stroke:0.45px">+</span>
<span class="t" style="left:1825.70px;top:955.00px;font-size:15.5px;letter-spacing:-1.375px;color:#605e5c">130%</span>
<svg style="left:1877px;top:955px" width="21" height="16" viewBox="0 0 21 16" fill="none" stroke="#323130" stroke-width="1.400"><rect x=".7" y=".7" width="19.600" height="15.600" rx="1.500"/><path d="M4.200 7.500V4.200h3.600M13.200 4.200h3.600v3.300M16.800 9.500v3.300h-3.600M7.800 12.800H4.200V9.500" stroke-width="1.300"/></svg>
<!--BOTTOM-->

</div>
</body>
</html>
